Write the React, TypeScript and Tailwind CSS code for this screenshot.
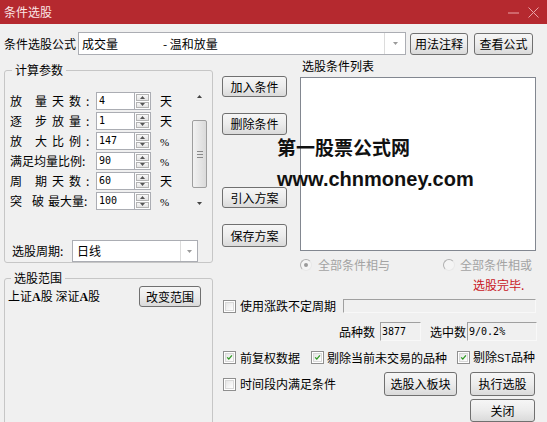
import React from 'react';

function Btn({ children, className = '' }: { children: React.ReactNode; className?: string }) {
  return (
    <div
      className={`flex items-center justify-center rounded-[3px] border border-[#707070] bg-linear-to-b from-[#f6f6f6] via-[#ececec] to-[#dadada] text-[12px] leading-none text-black ${className}`}
    >
      {children}
    </div>
  );
}

function Tri({ up = false, color = '#555' }: { up?: boolean; color?: string }) {
  return (
    <svg width="5" height="3" viewBox="0 0 5 3">
      <polygon points={up ? '0,3 5,3 2.5,0' : '0,0 5,0 2.5,3'} fill={color} />
    </svg>
  );
}

function Spin({ value }: { value: string }) {
  return (
    <div className="flex h-[18px]">
      <div className="w-[39px] border border-[#abadb3] bg-white pl-[2px] font-['DejaVu_Sans_Mono',monospace] text-[10px] leading-[16px]">
        {value}
      </div>
      <div className="flex w-[16px] flex-col gap-px border border-l-0 border-[#abadb3] bg-white p-px">
        <div className="flex flex-1 items-center justify-center border border-[#b4b4b4] bg-linear-to-b from-[#f8f8f8] to-[#e4e4e4]">
          <Tri up />
        </div>
        <div className="flex flex-1 items-center justify-center border border-[#b4b4b4] bg-linear-to-b from-[#f8f8f8] to-[#e4e4e4]">
          <Tri />
        </div>
      </div>
    </div>
  );
}

function Check({ checked = false }: { checked?: boolean }) {
  return (
    <div className="flex h-[13px] w-[13px] shrink-0 items-center justify-center border border-[#8f8f8f] bg-white p-px">
      <div className="flex h-full w-full items-center justify-center border border-[#d8d8d8] bg-linear-to-br from-[#e6e6e6] to-white">
        {checked && (
          <svg width="9" height="9" viewBox="0 0 9 9">
            <path d="M1.5 4.3 L3.6 6.5 L7.6 1.8" stroke="#2f9a24" strokeWidth="1.7" fill="none" />
          </svg>
        )}
      </div>
    </div>
  );
}

function Radio({ on = false }: { on?: boolean }) {
  return (
    <div className="flex h-[12px] w-[12px] shrink-0 items-center justify-center rounded-full border border-[#b0b0b0] border-r-[#e8e8e8] border-b-[#e8e8e8] bg-[#f4f4f4]">
      {on && <div className="h-[4px] w-[4px] rounded-full bg-[#9a9a9a]" />}
    </div>
  );
}

const Sunken = 'border border-t-[#a0a0a0] border-l-[#a0a0a0] border-b-[#f8f8f8] border-r-[#f8f8f8] bg-[#f0f0f0]';

const params: { label: React.ReactNode; value: string; unit: string }[] = [
  { label: <><span className="w-[25px]">放</span><span className="tracking-[5px]">量天数:</span></>, value: '4', unit: '天' },
  { label: <><span className="w-[25px]">逐</span><span className="tracking-[5px]">步放量:</span></>, value: '1', unit: '天' },
  { label: <><span className="w-[25px]">放</span><span className="tracking-[5px]">大比例:</span></>, value: '147', unit: '%' },
  { label: <span>满足均量比例:</span>, value: '90', unit: '%' },
  { label: <><span className="w-[25px]">周</span><span className="tracking-[5px]">期天数:</span></>, value: '60', unit: '天' },
  { label: <><span className="w-[22px]">突</span><span className="w-[16px]">破</span><span>最大量:</span></>, value: '100', unit: '%' },
];

export default function App() {
  return (
    <div className="relative h-[422px] w-[547px] overflow-hidden bg-[#f0f0f0] font-['Noto_Sans_CJK_SC',sans-serif] text-[12px] text-black">
      {/* title bar */}
      <div className="flex h-[24px] items-center justify-between bg-[#b5292f] pl-[4px] pr-[8px]">
        <span className="text-[12px] leading-none text-[#fbe6e6]">条件选股</span>
        <div className="flex items-center gap-[9px]">
          <svg width="11" height="11" viewBox="0 0 11 11">
            <line x1="0" y1="6" x2="11" y2="6" stroke="#eaa3a7" strokeWidth="1" />
          </svg>
          <svg width="11" height="11" viewBox="0 0 11 11">
            <path d="M0.5 0.5 L10.5 10.5 M10.5 0.5 L0.5 10.5" stroke="#eaa3a7" strokeWidth="1" />
          </svg>
        </div>
      </div>

      {/* formula row */}
      <div className="mt-[8px] flex h-[23px] items-center">
        <span className="w-[78px] pl-[4px] leading-none">条件选股公式</span>
        <div className="flex h-[23px] w-[328px] border border-[#abadb3] bg-white">
          <div className="flex flex-1 items-center pl-[3px] leading-none">
            <span className="w-[81px]">成交量</span>
            <span>-&nbsp;温和放量</span>
          </div>
          <div className="flex w-[21px] items-center justify-center border-l border-[#dcdcdc]">
            <Tri color="#9a9a9a" />
          </div>
        </div>
        <Btn className="ml-[4px] h-[22px] w-[58px]">用法注释</Btn>
        <Btn className="ml-[6px] h-[22px] w-[59px]">查看公式</Btn>
      </div>

      <div className="flex h-[367px]">
        {/* left column */}
        <div className="ml-[4px] flex w-[209px] flex-col">
          <fieldset className="mt-[7px] h-[207px] rounded-[3px] border border-[#c6c6c6]">
            <legend className="ml-[7px] px-[3px] text-[12px] leading-[16px]">计算参数</legend>
            <div className="flex">
              <div className="flex flex-col gap-[2px] pl-[5px] pt-[14px]">
                {params.map((p, i) => (
                  <div key={i} className="flex h-[18px] items-center">
                    <div className="flex w-[86px] items-center leading-none">{p.label}</div>
                    <Spin value={p.value} />
                    <span className="ml-[9px] leading-none">
                      {p.unit === '%' ? <span className="font-['Liberation_Serif',serif] text-[11px]">%</span> : p.unit}
                    </span>
                  </div>
                ))}
              </div>
              <div className="ml-auto mr-[5px] mt-[10px] flex h-[124px] w-[15px] flex-col items-center">
                <div className="flex h-[17px] items-center justify-center">
                  <Tri up color="#444" />
                </div>
                <div className="h-[15px]" />
                <div className="flex h-[68px] w-[15px] flex-col items-center justify-center gap-[2px] rounded-[2px] border border-[#9e9e9e] bg-linear-to-r from-[#f2f2f2] to-[#dadada]">
                  <div className="h-px w-[6px] bg-[#8a8a8a]" />
                  <div className="h-px w-[6px] bg-[#8a8a8a]" />
                  <div className="h-px w-[6px] bg-[#8a8a8a]" />
                </div>
                <div className="flex-1" />
                <div className="flex h-[17px] items-center justify-center">
                  <Tri color="#444" />
                </div>
              </div>
            </div>
            <div className="mt-[28px] flex h-[22px] items-center pl-[7px]">
              <span className="w-[60px] leading-none">选股周期:</span>
              <div className="flex h-[22px] w-[126px] border border-[#abadb3] bg-white">
                <div className="flex flex-1 items-center pl-[4px] leading-none">日线</div>
                <div className="flex w-[17px] items-center justify-center border-l border-[#dcdcdc]">
                  <Tri color="#9a9a9a" />
                </div>
              </div>
            </div>
          </fieldset>

          <fieldset className="mt-[7px] h-[160px] shrink-0 rounded-[3px] border border-[#c6c6c6]">
            <legend className="ml-[6px] px-[3px] text-[12px] leading-[16px]">选股范围</legend>
            <div className="flex items-center justify-between pl-[3px] pr-[11px]">
              <span className="leading-none">
                上证<span className="font-['Liberation_Serif',serif] font-bold">A</span>股&nbsp;深证
                <span className="font-['Liberation_Serif',serif] font-bold">A</span>股
              </span>
              <Btn className="h-[21px] w-[62px]">改变范围</Btn>
            </div>
          </fieldset>
        </div>

        {/* right column */}
        <div className="ml-[9px] flex flex-1 flex-col">
          <div className="flex h-[196px]">
            <div className="flex w-[65px] flex-col pt-[21px]">
              <Btn className="h-[21px]">加入条件</Btn>
              <Btn className="mt-[16px] h-[22px]">删除条件</Btn>
              <Btn className="mt-[52px] h-[21px]">引入方案</Btn>
              <Btn className="mt-[16px] h-[23px]">保存方案</Btn>
            </div>
            <div className="ml-[13px] flex w-[236px] flex-col">
              <div className="mt-[3px] h-[16px] pl-[2px] leading-[16px]">选股条件列表</div>
              <div className="mt-[3px] h-[174px] border border-[#828790] bg-white" />
            </div>
          </div>

          <div className="mt-[6px] flex h-[16px] items-center pl-[78px] text-[#a3a3a3]">
            <Radio on />
            <span className="ml-[6px] leading-none">全部条件相与</span>
            <div className="ml-[53px]">
              <Radio />
            </div>
            <span className="ml-[5px] leading-none">全部条件相或</span>
          </div>

          <div className="mt-[5px] h-[16px] pl-[251px] leading-[16px] text-[#c8161d]">选股完毕.</div>

          <div className="mt-[6px] flex h-[14px] items-center pl-[1px]">
            <Check />
            <span className="ml-[4px] leading-none">使用涨跌不定周期</span>
            <div className={`ml-[7px] h-[14px] w-[193px] ${Sunken}`} />
          </div>

          <div className="mt-[9px] flex h-[19px] items-center pl-[117px]">
            <span className="leading-none">品种数</span>
            <div className={`ml-[5px] flex h-[19px] w-[41px] items-center pl-px font-['DejaVu_Sans_Mono',monospace] text-[10px] leading-none ${Sunken}`}>
              3877
            </div>
            <span className="ml-[9px] leading-none">选中数</span>
            <div className={`ml-px flex h-[19px] w-[70px] items-center pl-px font-['DejaVu_Sans_Mono',monospace] text-[10px] leading-none ${Sunken}`}>
              9/0.2%
            </div>
          </div>

          <div className="mt-[10px] flex h-[14px] items-center pl-[1px]">
            <Check checked />
            <span className="ml-[4px] leading-none">前复权数据</span>
            <div className="ml-[11px]">
              <Check checked />
            </div>
            <span className="ml-[3px] leading-none">剔除当前未交易的品种</span>
            <div className="ml-[10px]">
              <Check checked />
            </div>
            <span className="ml-[3px] leading-none">
              剔除<span className="font-['Liberation_Sans_Narrow','Liberation_Sans',sans-serif] text-[11px]">ST</span>品种
            </span>
          </div>

          <div className="mt-[8px] flex h-[24px] items-center pl-[1px]">
            <Check />
            <span className="ml-[4px] w-[144px] leading-none">时间段内满足条件</span>
            <Btn className="h-[24px] w-[73px]">选股入板块</Btn>
            <Btn className="ml-[13px] h-[24px] w-[65px]">执行选股</Btn>
          </div>

          <Btn className="ml-[248px] mt-[3px] h-[24px] w-[65px]">关闭</Btn>
        </div>
      </div>

      {/* watermark */}
      <div className="absolute left-[277px] top-[137px] text-[19px] font-bold leading-[19px] text-[#111]">第一股票公式网</div>
      <div className="absolute left-[277px] top-[168px] font-['Liberation_Sans',sans-serif] text-[20px] font-bold leading-[22px] text-[#111]">
        www.chnmoney.com
      </div>
    </div>
  );
}
